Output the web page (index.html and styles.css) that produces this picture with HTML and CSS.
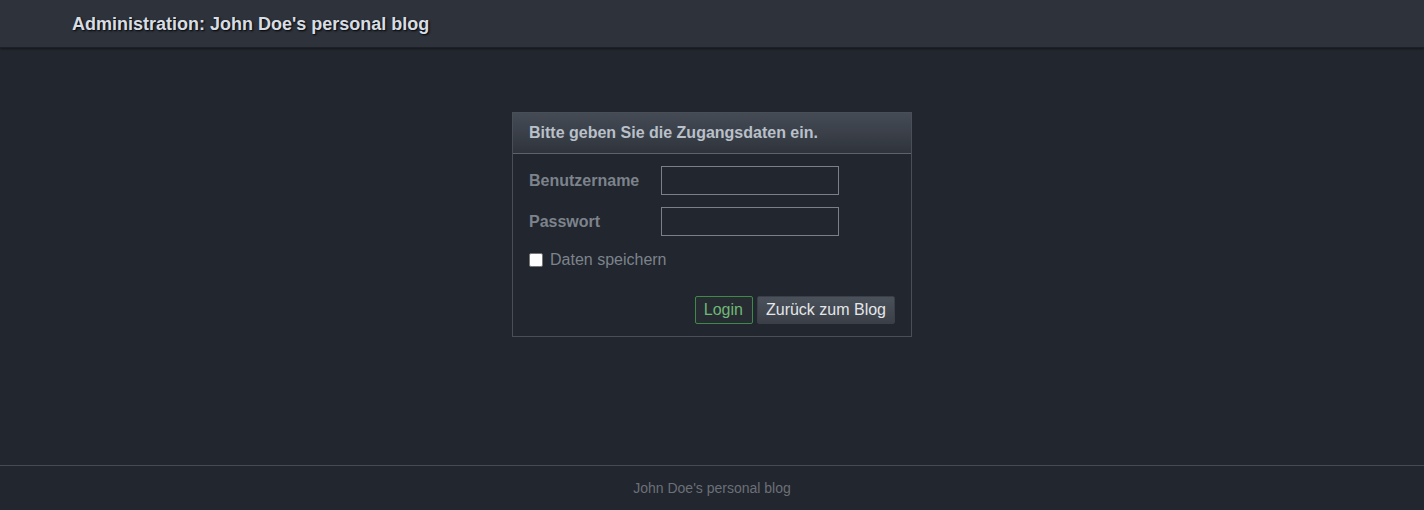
FILE: index.html
```html
<!DOCTYPE html>
<html lang="de">
<head>
<meta charset="utf-8">
<title>Administration</title>
<link rel="stylesheet" href="styles.css">
</head>
<body>
<header class="topbar">
  <h1 class="topbar-title">Administration: John Doe's personal blog</h1>
</header>
<main class="main">
  <form class="login-box">
    <div class="login-head">Bitte geben Sie die Zugangsdaten ein.</div>
    <div class="login-body">
      <div class="field-row">
        <label class="field-label" for="user">Benutzername</label>
        <input class="field-input" id="user" type="text">
      </div>
      <div class="field-row">
        <label class="field-label" for="pass">Passwort</label>
        <input class="field-input" id="pass" type="password">
      </div>
      <label class="remember"><span class="checkbox"></span>Daten speichern</label>
      <div class="actions">
        <button class="btn btn-login" type="button">Login</button>
        <button class="btn btn-back" type="button">Zurück zum Blog</button>
      </div>
    </div>
  </form>
</main>
<footer class="footer">John Doe's personal blog</footer>
</body>
</html>
```
FILE: styles.css
```css
html, body {
  margin: 0;
  padding: 0;
  height: 100%;
}
body {
  background: #22262e;
  font-family: "Liberation Sans", Arial, sans-serif;
  color: #9aa0a8;
  display: flex;
  flex-direction: column;
}
.topbar {
  height: 48px;
  box-sizing: border-box;
  background: #2d323b;
  box-shadow: 0 1px 2px rgba(0,0,0,0.45);
  border-bottom: 1px solid #1d2027;
  display: flex;
  align-items: center;
  padding-left: 72px;
  padding-top: 1px;
}
.topbar-title {
  margin: 0;
  font-size: 18px;
  font-weight: bold;
  color: #d8dde4;
  text-shadow: 1px 1px 2px #000;
}
.main {
  flex: 1;
  display: flex;
  justify-content: center;
  align-items: flex-start;
  padding-top: 64px;
}
.login-box {
  width: 400px;
  box-sizing: border-box;
  border: 1px solid #4a4f57;
  background: #22262e;
}
.login-head {
  height: 41px;
  box-sizing: border-box;
  padding: 0 16px;
  display: flex;
  align-items: center;
  font-size: 16px;
  font-weight: bold;
  color: #b9c0c9;
  background: linear-gradient(#454b55, #2f343c);
  border-bottom: 1px solid #5d636c;
}
.login-body {
  padding: 12px 16px 12px 16px;
}
.field-row {
  display: flex;
  align-items: center;
  height: 29px;
  margin-bottom: 12px;
}
.field-label {
  width: 132px;
  font-size: 16px;
  font-weight: bold;
  color: #7c838c;
}
.field-input {
  width: 178px;
  height: 29px;
  box-sizing: border-box;
  background: #22262e;
  border: 1px solid #7b8088;
  padding: 2px 4px;
  color: #ccc;
  font: inherit;
}
.remember {
  display: flex;
  align-items: center;
  font-size: 16px;
  color: #7c838c;
  height: 20px;
  margin-top: 14px;
}
.checkbox {
  width: 14px;
  height: 14px;
  box-sizing: border-box;
  background: #fff;
  border: 1px solid #767676;
  border-radius: 2px;
  margin-right: 7px;
}
.actions {
  display: flex;
  justify-content: flex-end;
  gap: 4px;
  margin-top: 26px;
}
.btn {
  font-family: "Liberation Sans", Arial, sans-serif;
  font-size: 16px;
  height: 28px;
  box-sizing: border-box;
  padding: 0 8px;
  border-radius: 2px;
  cursor: pointer;
}
.btn-login {
  background: #272c32;
  border: 1px solid #3f8a4a;
  color: #6fb877;
  padding: 0 9px 0 8px;
}
.btn-back {
  background: linear-gradient(#4b515a, #3b4048);
  border: 1px solid #3b4048;
  color: #e3e6ea;
}
.footer {
  height: 44px;
  border-top: 1px solid #464b52;
  display: flex;
  align-items: center;
  justify-content: center;
  font-size: 14px;
  color: #6b7078;
}
```
